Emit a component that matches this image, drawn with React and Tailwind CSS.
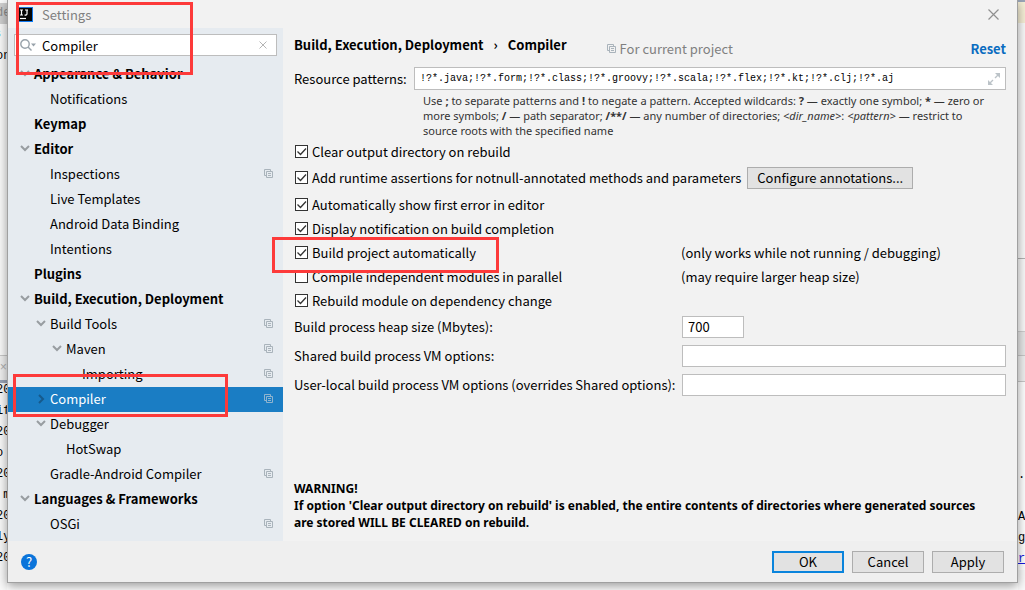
import React, { useState } from "react";

const TREE = [
  { label: "Appearance & Behavior", level: 0, bold: true, arrow: "down" },
  { label: "Notifications", level: 1 },
  { label: "Keymap", level: 0, bold: true },
  { label: "Editor", level: 0, bold: true, arrow: "down" },
  { label: "Inspections", level: 1, project: true },
  { label: "Live Templates", level: 1 },
  { label: "Android Data Binding", level: 1 },
  { label: "Intentions", level: 1 },
  { label: "Plugins", level: 0, bold: true },
  { label: "Build, Execution, Deployment", level: 0, bold: true, arrow: "down" },
  { label: "Build Tools", level: 1, arrow: "down", project: true },
  { label: "Maven", level: 2, arrow: "down", project: true },
  { label: "Importing", level: 3, project: true },
  { label: "Compiler", level: 1, arrow: "right", project: true, selected: true },
  { label: "Debugger", level: 1, arrow: "down" },
  { label: "HotSwap", level: 2 },
  { label: "Gradle-Android Compiler", level: 1, project: true },
  { label: "Languages & Frameworks", level: 0, bold: true, arrow: "down" },
  { label: "OSGi", level: 1, project: true },
];

const INDENT = ["pl-3", "pl-7", "pl-11", "pl-[60px]"];

function ProjectIcon({ className = "text-[#a9b3bb]" }) {
  return (
    <svg className={`size-[9px] shrink-0 ${className}`} viewBox="0 0 9 9" fill="none" stroke="currentColor" aria-hidden="true">
      <path d="M2 6.5H.5V.5h6V2" />
      <path d="M2.5 2.5h6v6h-6zM4 4.5h3M4 6.5h3" />
    </svg>
  );
}

function Chevron({ dir, selected }) {
  return (
    <svg
      className={`size-[10px] ${selected ? "text-[#165a8c]" : "text-[#989da1]"}`}
      viewBox="0 0 10 10"
      fill="none"
      stroke="currentColor"
      strokeWidth="2"
      aria-hidden="true"
    >
      {dir === "down" ? <path d="M1 2l4 4 4-4" /> : <path d="M3 1l4 4-4 4" />}
    </svg>
  );
}

function Mark({ className }) {
  return <span aria-hidden="true" className={`pointer-events-none absolute z-20 border-3 border-[#fd3a3a] ${className}`} />;
}

function TreeRow({ item }) {
  return (
    <li className="relative">
      <button
        type="button"
        aria-current={item.selected ? "page" : undefined}
        className={`flex h-[25px] w-full items-center pr-[10px] pb-0.5 text-left ${INDENT[item.level]} ${item.bold ? "font-bold" : ""} ${
          item.selected ? "bg-[#1a7dc4] text-white" : ""
        }`}
      >
        <span className="w-[14px] shrink-0">{item.arrow && <Chevron dir={item.arrow} selected={item.selected} />}</span>
        <span className="flex-1 whitespace-nowrap">{item.label}</span>
        {item.project && <ProjectIcon className={item.selected ? "text-[#8fb4cf]" : "text-[#a9b3bb]"} />}
      </button>
      {item.selected && <Mark className="-top-[13px] left-[5px] h-[43px] w-[215px]" />}
    </li>
  );
}

function Check({ label, defaultChecked, marked }) {
  const [on, setOn] = useState(defaultChecked);
  return (
    <label className="relative flex items-center gap-1 whitespace-nowrap">
      <input
        type="checkbox"
        checked={on}
        onChange={(e) => setOn(e.target.checked)}
        className="peer ml-px size-[13px] appearance-none border border-[#333333] bg-white"
      />
      <svg
        className="pointer-events-none absolute left-px hidden size-[13px] peer-checked:block"
        viewBox="0 0 13 13"
        fill="none"
        stroke="#333"
        strokeWidth="1.3"
        aria-hidden="true"
      >
        <path d="M2.5 6.5l3 3 5.5-6" />
      </svg>
      {label}
      {marked && <Mark className="-top-[7px] -left-[22px] h-9 w-[227px]" />}
    </label>
  );
}

function DialogButton({ children, primary }) {
  return (
    <button
      type="button"
      className={`h-[22px] w-[72px] bg-[#e2e2e2] ${primary ? "border-2 border-[#0a84dc] leading-[16px]" : "border border-[#adadad]"}`}
    >
      {children}
    </button>
  );
}

function FormRow({ id, label, value, className }) {
  return (
    <div className="grid h-[29px] grid-cols-[388px_1fr] items-center">
      <label htmlFor={id} className="whitespace-nowrap">{label}</label>
      <input id={id} defaultValue={value} className={`h-[22px] border border-[#bdbdbd] bg-white px-[5px] outline-none ${className}`} />
    </div>
  );
}

const LEFT_LOG = ["20", "if", "20", "o", "20", " m", "20", "ly", "20"];

function LeftStrip() {
  return (
    <div aria-hidden="true" className="w-[7px] shrink-0 overflow-hidden bg-[#fafafa] font-['Liberation_Mono',monospace] text-xs leading-[21px]">
      <div className="mt-[3px] h-[21px] bg-[#cfcfcf] text-[#8c8c8c]"><div className="-ml-1">de</div></div>
      <div className="-ml-[6px] h-[22px] text-[#38a8dc]">s</div>
      <div className="-ml-1 h-[309px]">on</div>
      <div className="flex h-[25px] items-center justify-end border-t border-[#c8c8c8] bg-[#f0f0f0] text-[#b0b0b0]">×</div>
      <div className="h-[3px] bg-[#9aa5b8]" />
      <div className="-mt-[3px] -ml-1">
        {LEFT_LOG.map((t, i) => (
          <div key={i} className="h-[21px] whitespace-pre">{t}</div>
        ))}
      </div>
    </div>
  );
}

function RightStrip() {
  return (
    <div aria-hidden="true" className="w-[7px] shrink-0 overflow-hidden bg-[#fafafa] font-['Liberation_Mono',monospace] text-xs leading-[21px]">
      <div className="h-0.5 bg-[#9aa5b8]" />
      <div className="h-[21px] bg-[#f6efd6]" />
      <div className="h-[235px]" />
      <div className="h-[73px] border-t border-[#b4b4b4]" />
      <div className="h-6 border-t border-[#d0d0d0] bg-[#e8e8e8]" />
      <div className="h-[27px] border-y border-[#c8c8c8] bg-[#f0f0f0]" />
      <div className="bg-white pt-[83px]">
        <div className="h-[42px]">.</div>
        <div className="h-[21px]">A</div>
        <div className="h-[21px]">g</div>
        <div className="h-[21px] text-[#1a1ae0] underline">r</div>
      </div>
    </div>
  );
}

export default function App() {
  return (
    <div className="flex min-h-screen bg-white font-['Noto_Sans_CJK_SC','Noto_Sans',sans-serif] text-[13px] leading-[17px] text-black">
      <LeftStrip />
      <main className="relative z-10 mb-[7px] flex min-w-0 flex-1 flex-col border-x border-b border-[#a0a0a0] bg-[#f2f2f2] shadow-[0_3px_10px_rgba(0,0,0,0.4)]">
        <header className="flex h-7 items-center pr-[18px] pl-[10px]">
          <svg className="size-[15px]" viewBox="0 0 15 15" aria-hidden="true">
            <defs>
              <linearGradient id="logo" x1="0" y1="0" x2="1" y2="1">
                <stop offset="0" stopColor="#2b6fd0" />
                <stop offset="1" stopColor="#087cfa" />
              </linearGradient>
            </defs>
            <rect width="15" height="15" fill="url(#logo)" />
            <rect x="0" y="1" width="14" height="13" fill="#050505" />
            <path d="M2 3h3M3.5 3v5M2 8h3M7 3h3M9 3v4q0 1.2-2.5 1" fill="none" stroke="#fff" strokeWidth="1.2" />
            <path d="M2 11.5h6" stroke="#fff" strokeWidth="1.2" />
          </svg>
          <h1 className="ml-[9px] flex-1 text-[#808080]">Settings</h1>
          <button type="button" aria-label="Close" className="text-[#909090]">
            <svg className="size-[11px]" viewBox="0 0 11 11" fill="none" stroke="currentColor" strokeWidth="1.2" aria-hidden="true">
              <path d="M.5.5l10 10M10.5.5l-10 10" />
            </svg>
          </button>
        </header>

        <div className="flex flex-1">
          <nav aria-label="Settings categories" className="flex w-[275px] shrink-0 flex-col gap-[6px] bg-[#e6ebf0] pt-[6px]">
            <div className="relative mr-[6px] ml-[6px] flex h-[22px] items-center border border-[#bdbdbd] bg-white pr-[9px] pl-[5px]">
              <svg className="h-3 w-4 shrink-0" viewBox="0 0 16 12" fill="none" stroke="#98a2aa" strokeWidth="1.4" aria-hidden="true">
                <circle cx="5" cy="5" r="4.2" />
                <path d="M8 8l3.5 3.5" />
                <path d="M11 4.5h5l-2.5 3z" fill="#98a2aa" stroke="none" />
              </svg>
              <input aria-label="Search settings" defaultValue="Compiler" className="ml-[6px] h-5 min-w-0 flex-1 bg-transparent outline-none" />
              <button type="button" aria-label="Clear search" className="text-[#b4b4b4]">
                <svg className="size-2" viewBox="0 0 8 8" fill="none" stroke="currentColor" aria-hidden="true">
                  <path d="M.5.5l7 7M7.5.5l-7 7" />
                </svg>
              </button>
              <Mark className="-top-[33px] left-px h-[73px] w-[177px]" />
            </div>
            <ul>
              {TREE.map((item) => (
                <TreeRow key={item.label} item={item} />
              ))}
            </ul>
          </nav>

          <section className="flex min-w-0 flex-1 flex-col px-[11px] pt-2 pb-[10px]">
            <div className="flex h-6 items-center">
              <h2 className="flex gap-[10px] self-start font-bold whitespace-nowrap">
                <span>Build, Execution, Deployment</span>
                <span>›</span>
                <span>Compiler</span>
              </h2>
              <p className="ml-10 flex flex-1 items-center gap-1 whitespace-nowrap text-[#808080]">
                <ProjectIcon />
                For current project
              </p>
              <a href="#reset" className="font-bold text-[#0a6cc0]">Reset</a>
            </div>

            <div className="mt-[7px] flex items-center">
              <label htmlFor="patterns" className="w-[120px] shrink-0 whitespace-nowrap">Resource patterns:</label>
              <div className="flex h-[23px] min-w-0 flex-1 items-center border border-[#bdbdbd] bg-white pr-[5px] pl-[5px]">
                <input
                  id="patterns"
                  defaultValue="!?*.java;!?*.form;!?*.class;!?*.groovy;!?*.scala;!?*.flex;!?*.kt;!?*.clj;!?*.aj"
                  className="min-w-0 flex-1 bg-transparent font-['Liberation_Mono',monospace] text-[10px] outline-none"
                />
                <button type="button" aria-label="Expand" className="text-[#bcc3c8]">
                  <svg className="size-3" viewBox="0 0 12 12" aria-hidden="true">
                    <path d="M7 0h5v5zM0 7v5h5z" fill="currentColor" />
                    <path d="M10.5 1.5L7 5M5 7L1.5 10.5" stroke="currentColor" strokeWidth="1.4" />
                  </svg>
                </button>
              </div>
            </div>
            <p className="mt-[3px] mb-px ml-[129px] font-['Noto_Sans',sans-serif] text-[11px] leading-[15px] text-[#333333]">
              Use <b>;</b> to separate patterns and <b>!</b> to negate a pattern. Accepted wildcards: <b>?</b> — exactly one symbol; <b>*</b> — zero or
              <br />
              more symbols; <b>/</b> — path separator; <b>/**/</b> — any number of directories; <i>&lt;dir_name&gt;</i>: <i>&lt;pattern&gt;</i> — restrict to
              <br />
              source roots with the specified name
            </p>

            <div className="flex h-6 items-center"><Check label="Clear output directory on rebuild" defaultChecked /></div>
            <div className="flex h-[29px] items-center gap-[6px]">
              <Check label="Add runtime assertions for notnull-annotated methods and parameters" defaultChecked />
              <button type="button" className="h-[22px] w-[166px] border border-[#adadad] bg-[#e2e2e2] whitespace-nowrap">
                Configure annotations...
              </button>
            </div>
            <div className="flex h-6 items-center"><Check label="Automatically show first error in editor" defaultChecked /></div>
            <div className="flex h-6 items-center"><Check label="Display notification on build completion" defaultChecked /></div>
            <div className="grid h-6 grid-cols-[387px_1fr] items-center">
              <Check label="Build project automatically" defaultChecked marked />
              <span>(only works while not running / debugging)</span>
            </div>
            <div className="grid h-6 grid-cols-[387px_1fr] items-center">
              <Check label="Compile independent modules in parallel" defaultChecked={false} />
              <span>(may require larger heap size)</span>
            </div>
            <div className="flex h-6 items-center"><Check label="Rebuild module on dependency change" defaultChecked /></div>

            <FormRow id="heap" label="Build process heap size (Mbytes):" value="700" className="w-[62px]" />
            <FormRow id="shared" label="Shared build process VM options:" value="" className="w-full" />
            <FormRow id="local" label="User-local build process VM options (overrides Shared options):" value="" className="w-full" />

            <p className="mt-auto font-['Noto_Sans',sans-serif] text-xs leading-[17px] font-bold">
              WARNING!
              <br />
              If option 'Clear output directory on rebuild' is enabled, the entire contents of directories where generated sources
              <br />
              are stored WILL BE CLEARED on rebuild.
            </p>
          </section>
        </div>

        <footer className="flex h-[41px] items-center gap-2 bg-[#efefef] pr-[13px] pl-[13px]">
          <button type="button" aria-label="Help" className="mr-auto flex size-4 items-center justify-center rounded-full bg-[#0a74da] text-white">
            ?
          </button>
          <DialogButton primary>OK</DialogButton>
          <DialogButton>Cancel</DialogButton>
          <DialogButton>Apply</DialogButton>
        </footer>
      </main>
      <RightStrip />
    </div>
  );
}
